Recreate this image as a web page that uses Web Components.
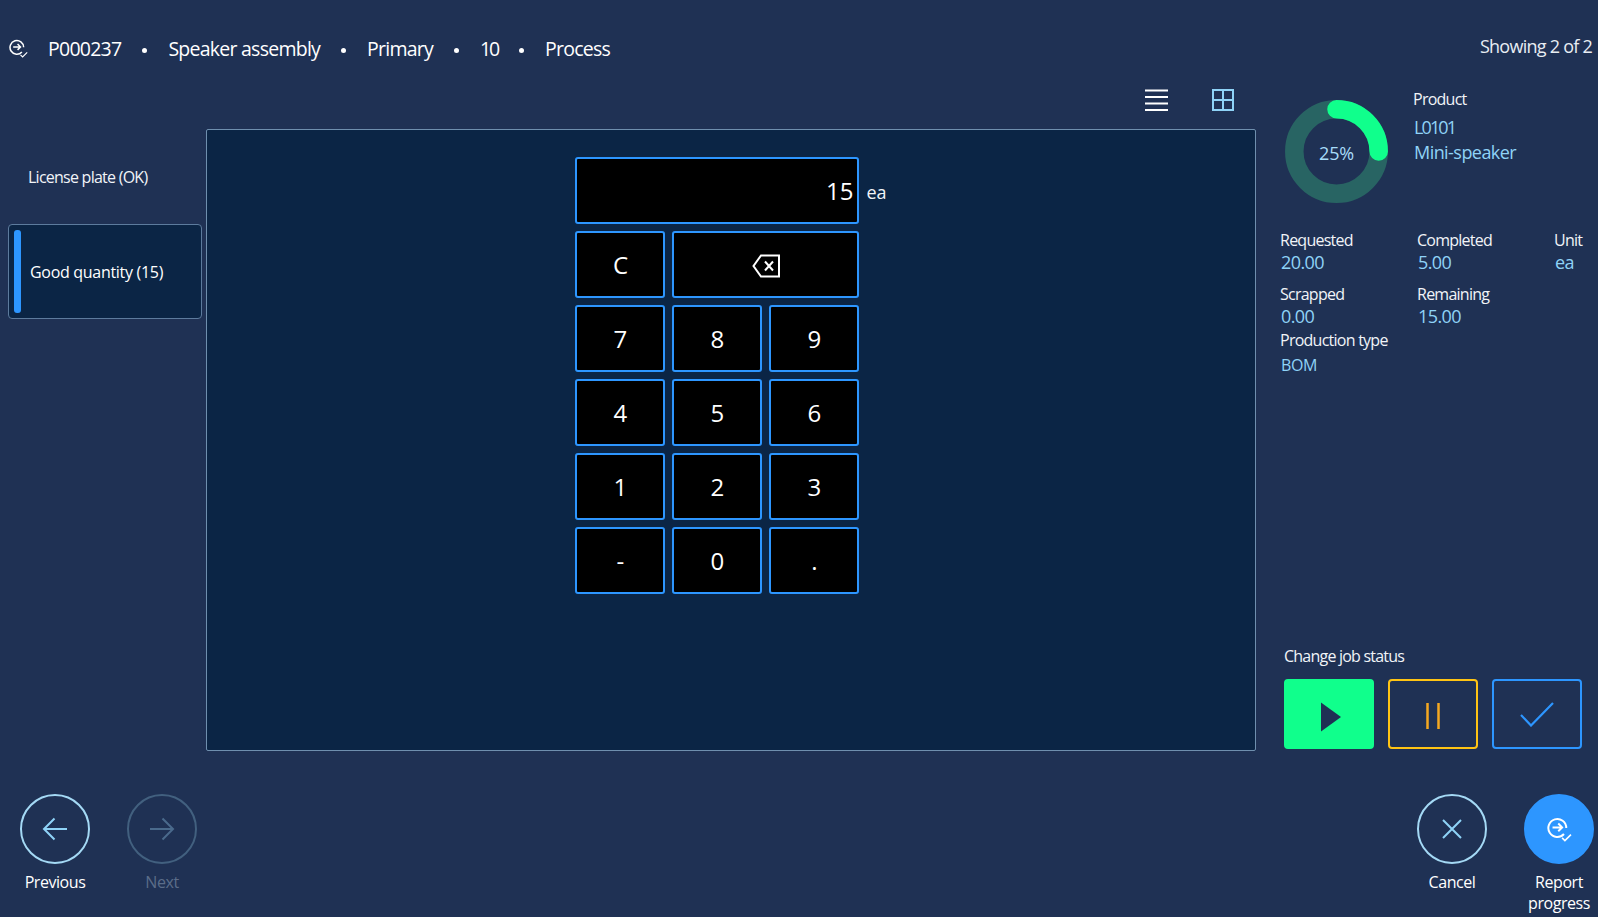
<!DOCTYPE html>
<html lang="en"><head><meta charset="utf-8"><title>Report progress</title>
<style>
html,body{margin:0;padding:0;background:#1f3154;}
body{font-family:"Open Sans","Noto Sans",sans-serif;color:#fff;}
</style></head><body>
<job-app></job-app>
<script>
const FONT='"Open Sans","Noto Sans",sans-serif';
function def(name,css,html,extra){
  class C extends HTMLElement{
    constructor(){super();const s=this.attachShadow({mode:'open'});s.innerHTML='<style>'+css+'</style>'+(typeof html==='function'?html(this):html);}
    connectedCallback(){ if(extra) extra(this); }
  }
  customElements.define(name,C);
}
const ICON_REPORT='<svg viewBox="0 0 24 24" width="100%" height="100%" fill="none" stroke="currentColor" stroke-width="1.9"><path d="M16.3 16.3A8.6 8.6 0 1 1 18.500 10.500"/><path d="M5.300 10h9M10.800 6.300 14.500 10l-3.700 3.700"/><path d="M14.500 20l2.700 2.700 5.800-5.800" stroke-width="1.500"/></svg>';

def('dot-sep',':host{display:block;width:5px;height:5px;border-radius:50%;background:#fff;margin-top:3px}','');

def('job-header',`
:host{display:flex;align-items:center;height:86px;padding:11px 6px 0 9px;box-sizing:border-box;font-size:19.500px;letter-spacing:-.75px}
.ic{width:19px;height:19px;color:#fff;margin:-4px 20px 0 0}
.crumbs{display:flex;align-items:center;gap:21px;flex:1}
.n{letter-spacing:-2.200px}
.show{font-size:18px;letter-spacing:-.75px;color:#e8edf3;margin-top:-6px}
`,`<div class="ic">${ICON_REPORT}</div>
<div class="crumbs"><span>P000237</span><dot-sep></dot-sep><span>Speaker assembly</span><dot-sep></dot-sep><span>Primary</span><dot-sep></dot-sep><span class="n">10</span><dot-sep></dot-sep><span>Process</span></div>
<div class="show">Showing 2 of 2</div>`);

def('step-item',`
:host{display:flex;align-items:center;box-sizing:border-box;height:93px;padding:0 0 2px 20px;font-size:16px;letter-spacing:-.75px;color:#f1f4f8}
:host([selected]){height:95px;padding:5px 0 5px 5px;gap:9px;background:#0b2545;border:1px solid #5d7b9d;border-radius:4px;color:#fff;letter-spacing:-.3px}
.bar{display:none;width:7px;align-self:stretch;border-radius:3px;background:#2d96ff}
:host([selected]) .bar{display:block}
`,`<span class="bar"></span><slot></slot>`);

def('step-list',`:host{display:flex;flex-direction:column;padding:45px 4px 0 8px;box-sizing:border-box}`,`<slot></slot>`);

def('key-btn',`
:host{display:flex;align-items:center;justify-content:center;box-sizing:border-box;height:67px;background:#000;border:2px solid #2d96ff;border-radius:3px;color:#fff;font-size:24px;cursor:pointer}
:host([wide]){grid-column:span 2}
`,`<slot></slot>`);

def('num-pad',`
:host{display:flex;align-items:flex-start;gap:7px}
.grid{display:grid;grid-template-columns:repeat(3,90px);column-gap:7px;row-gap:7px}
.disp{grid-column:1/-1;height:67px;box-sizing:border-box;background:#000;border:2px solid #2d96ff;border-radius:3px;display:flex;align-items:center;justify-content:flex-end;padding:0 4px 0 0;font-size:24px;color:#fff}
.unit{font-size:18px;color:#f1f4f8;margin-top:23px}
svg{display:block}
`,`<div class="grid">
<div class="disp">15</div>
<key-btn>C</key-btn>
<key-btn wide><svg width="28" height="24" viewBox="0 0 28 24" fill="none" stroke="#fff" stroke-width="2" style="margin-top:2px"><path d="M9 1.500H27V22.500H9L1.500 12Z"/><path d="M13 7.500l8 9M21 7.500l-8 9"/></svg></key-btn>
<key-btn>7</key-btn><key-btn>8</key-btn><key-btn>9</key-btn>
<key-btn>4</key-btn><key-btn>5</key-btn><key-btn>6</key-btn>
<key-btn>1</key-btn><key-btn>2</key-btn><key-btn>3</key-btn>
<key-btn>-</key-btn><key-btn>0</key-btn><key-btn>.</key-btn>
</div><div class="unit">ea</div>`);

def('view-toggle',`
:host{display:flex;justify-content:flex-end;align-items:flex-start;gap:44px;height:43px;padding:3px 22px 0 0;box-sizing:border-box}
svg{display:block}
`,`<svg width="23" height="22" viewBox="0 0 23 22" stroke="#fff" stroke-width="2"><path d="M0 1.500H23M0 8H23M0 14.500H23M0 21H23"/></svg>
<svg width="22" height="22" viewBox="0 0 22 22" fill="none" stroke="#8fd3f7" stroke-width="2"><path d="M1 1H21V21H1ZM11 1V21M1 11H21"/></svg>`);

def('work-panel',`
:host{display:flex;justify-content:center;align-items:flex-start;box-sizing:border-box;height:622px;padding-top:27px;background:#0b2545;border:1px solid #6f8fae;border-radius:2px}
`,`<slot></slot>`);

def('progress-ring',`
:host{display:block;position:relative;width:103px;height:103px}
svg{display:block}
.t{position:absolute;inset:0;display:flex;align-items:center;justify-content:center;font-size:18px;color:#a8dcf9;letter-spacing:-.2px;padding-top:3px}
`,`<svg width="103" height="103" viewBox="0 0 103 103" fill="none" stroke-width="18.500"><circle cx="51.500" cy="51.500" r="42.200" stroke="#286463"/><path d="M51.500 9.300A42.200 42.200 0 0 1 93.700 51.500" stroke="#10ff8c" stroke-linecap="round"/></svg><div class="t">25%</div>`);

def('stat-cell',`
:host{display:block;font-size:16px;letter-spacing:-.75px;color:#f1f4f8;line-height:24px}
.v{font-size:18px;letter-spacing:-.6px;color:#8fd3f7;line-height:20px;padding-left:1px}
:host([small]) .v{font-size:16px;letter-spacing:-.35px;padding-top:3px}
`,el=>`<div>${el.getAttribute('label')}</div><div class="v">${el.getAttribute('value')}</div>`);

def('product-info',`
:host{display:block}
.head{display:flex;gap:25px;height:142px}
progress-ring{margin:14px 0 0 5px}
.l{font-size:16px;letter-spacing:-.75px;color:#f1f4f8;line-height:26px;margin-bottom:3px}
.v{font-size:18px;letter-spacing:-.55px;color:#8fd3f7;line-height:24.500px;padding-left:1px}
.code{letter-spacing:-1.900px}
.grid{display:grid;grid-template-columns:repeat(3,137px);grid-template-rows:54px 46px auto}
`,`<div class="head"><progress-ring></progress-ring><div><div class="l">Product</div><div class="v code">L0101</div><div class="v">Mini-speaker</div></div></div>
<div class="grid">
<stat-cell label="Requested" value="20.00"></stat-cell><stat-cell label="Completed" value="5.00"></stat-cell><stat-cell label="Unit" value="ea"></stat-cell>
<stat-cell label="Scrapped" value="0.00"></stat-cell><stat-cell label="Remaining" value="15.00"></stat-cell><span></span>
<stat-cell label="Production type" value="BOM" small></stat-cell>
</div>`);

def('status-btn',`
:host{display:flex;align-items:center;justify-content:center;box-sizing:border-box;width:90px;height:70px;border:2px solid var(--c);border-radius:4px;color:var(--c);cursor:pointer}
:host([filled]){background:var(--c);color:#1f3154}
svg{display:block}
`,`<slot></slot>`);

def('job-status',`
:host{display:block;padding:0 0 2px 4px}
.l{font-size:16px;letter-spacing:-.78px;color:#f1f4f8;line-height:24px;margin-bottom:11px}
.row{display:flex;gap:14px}
`,`<div class="l">Change job status</div><div class="row">
<status-btn filled style="--c:#10ff8c"><svg width="22" height="30" viewBox="0 0 22 30" fill="#1f3154" style="margin:6px 0 0 4px"><path d="M1 0.500 21 15 1 29.500Z"/></svg></status-btn>
<status-btn style="--c:#ffc414"><svg width="14" height="26" viewBox="0 0 14 26" stroke="#f5a821" stroke-width="2.500" style="margin-top:4px"><path d="M1.500 0V26M12.500 0V26"/></svg></status-btn>
<status-btn style="--c:#2d96ff"><svg width="34" height="25" viewBox="0 0 34 25" fill="none" stroke="#2d96ff" stroke-width="2.200"><path d="M1 13 11 23.500 33 1"/></svg></status-btn>
</div>`);

def('side-col',`:host{display:flex;flex-direction:column;justify-content:space-between;box-sizing:border-box;height:665px;padding-left:24px}`,`<slot></slot>`);

def('round-btn',`
:host{display:flex;flex-direction:column;align-items:center;width:70px;font-size:16px;letter-spacing:-.45px;line-height:21px;color:#fff;text-align:center;cursor:pointer}
.c{box-sizing:border-box;width:70px;height:70px;border-radius:50%;border:2px solid #a4d9f5;color:#8fd3f7;display:flex;align-items:center;justify-content:center;margin-bottom:8px}
:host([disabled]){color:#5b6d89}
:host([disabled]) .c{border-color:#42607f;color:#4a6a8c}
:host([primary]) .c{background:#2d96ff;border-color:#2d96ff;color:#fff}
.lbl{white-space:nowrap}
`,`<div class="c"><slot name="icon"></slot></div><div class="lbl"><slot></slot></div>`);

def('action-bar',`
:host{display:flex;justify-content:space-between;box-sizing:border-box;height:166px;padding:43px 4px 0 20px}
.g{display:flex;gap:37px}
svg{display:block}
`,`<div class="g"><round-btn><svg slot="icon" width="26" height="24" viewBox="0 0 26 24" fill="none" stroke="currentColor" stroke-width="2"><path d="M25 12H2M12.500 1.500 2 12 12.500 22.500"/></svg>Previous</round-btn>
<round-btn disabled><svg slot="icon" width="26" height="24" viewBox="0 0 26 24" fill="none" stroke="currentColor" stroke-width="2"><path d="M1 12H24M13.500 1.500 24 12 13.500 22.500"/></svg>Next</round-btn></div>
<div class="g"><round-btn><svg slot="icon" width="20" height="20" viewBox="0 0 20 20" fill="none" stroke="currentColor" stroke-width="2"><path d="M1 1 19 19M19 1 1 19"/></svg>Cancel</round-btn>
<round-btn primary><span slot="icon" style="display:block;width:25px;height:25px">${ICON_REPORT}</span>Report<br>progress</round-btn></div>`);

def('job-app',`
:host{display:block;width:1598px;height:917px;overflow:hidden;background:#1f3154;font-family:${FONT};color:#fff}
.mid{display:grid;grid-template-columns:206px 1050px 342px}
`,`<job-header></job-header>
<div class="mid">
<step-list><step-item>License plate (OK)</step-item><step-item selected>Good quantity (15)</step-item></step-list>
<div><view-toggle></view-toggle><work-panel><num-pad></num-pad></work-panel></div>
<side-col><product-info></product-info><job-status></job-status></side-col>
</div>
<action-bar></action-bar>`);
</script>
</body></html>
